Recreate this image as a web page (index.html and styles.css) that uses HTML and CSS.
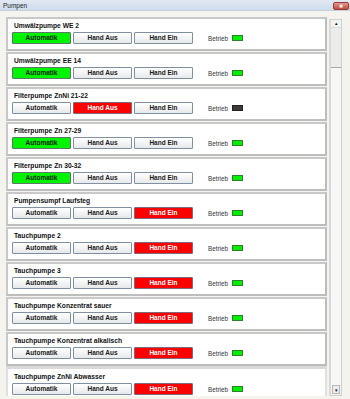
FILE: index.html
```html
<!DOCTYPE html>
<html>
<head>
<meta charset="utf-8">
<link rel="stylesheet" href="styles.css">
</head>
<body>
<div class="titlebar">
  <span class="title">Pumpen</span>
  <span class="close">&#x2716;</span>
</div>
<div class="main">
  <div class="list">
    <div class="panel">
      <div class="label">Umwälzpumpe WE 2</div>
      <div class="row"><span class="btn green">Automatik</span><span class="btn">Hand Aus</span><span class="btn">Hand Ein</span><span class="betrieb">Betrieb</span><span class="led"></span></div>
    </div>
    <div class="panel">
      <div class="label">Umwälzpumpe EE 14</div>
      <div class="row"><span class="btn green">Automatik</span><span class="btn">Hand Aus</span><span class="btn">Hand Ein</span><span class="betrieb">Betrieb</span><span class="led"></span></div>
    </div>
    <div class="panel">
      <div class="label">Filterpumpe ZnNi 21-22</div>
      <div class="row"><span class="btn">Automatik</span><span class="btn red">Hand Aus</span><span class="btn">Hand Ein</span><span class="betrieb">Betrieb</span><span class="led off"></span></div>
    </div>
    <div class="panel">
      <div class="label">Filterpumpe Zn 27-29</div>
      <div class="row"><span class="btn green">Automatik</span><span class="btn">Hand Aus</span><span class="btn">Hand Ein</span><span class="betrieb">Betrieb</span><span class="led"></span></div>
    </div>
    <div class="panel">
      <div class="label">Filterpumpe Zn 30-32</div>
      <div class="row"><span class="btn green">Automatik</span><span class="btn">Hand Aus</span><span class="btn">Hand Ein</span><span class="betrieb">Betrieb</span><span class="led"></span></div>
    </div>
    <div class="panel">
      <div class="label">Pumpensumpf Laufsteg</div>
      <div class="row"><span class="btn">Automatik</span><span class="btn">Hand Aus</span><span class="btn red">Hand Ein</span><span class="betrieb">Betrieb</span><span class="led"></span></div>
    </div>
    <div class="panel">
      <div class="label">Tauchpumpe 2</div>
      <div class="row"><span class="btn">Automatik</span><span class="btn">Hand Aus</span><span class="btn red">Hand Ein</span><span class="betrieb">Betrieb</span><span class="led"></span></div>
    </div>
    <div class="panel">
      <div class="label">Tauchpumpe 3</div>
      <div class="row"><span class="btn">Automatik</span><span class="btn">Hand Aus</span><span class="btn red">Hand Ein</span><span class="betrieb">Betrieb</span><span class="led"></span></div>
    </div>
    <div class="panel">
      <div class="label">Tauchpumpe Konzentrat sauer</div>
      <div class="row"><span class="btn">Automatik</span><span class="btn">Hand Aus</span><span class="btn red">Hand Ein</span><span class="betrieb">Betrieb</span><span class="led"></span></div>
    </div>
    <div class="panel">
      <div class="label">Tauchpumpe Konzentrat alkalisch</div>
      <div class="row"><span class="btn">Automatik</span><span class="btn">Hand Aus</span><span class="btn red">Hand Ein</span><span class="betrieb">Betrieb</span><span class="led"></span></div>
    </div>
    <div class="panel cut">
      <div class="label">Tauchpumpe ZnNi Abwasser</div>
      <div class="row"><span class="btn">Automatik</span><span class="btn">Hand Aus</span><span class="btn red">Hand Ein</span><span class="betrieb">Betrieb</span><span class="led"></span></div>
    </div>
  </div>
  <div class="scrollbar">
    <div class="arrow">&#9652;</div>
    <div class="thumb"></div>
    <div class="track"></div>
    <div class="arrow down">&#9662;</div>
  </div>
</div>
</body>
</html>
```
FILE: styles.css
```css
html, body {
  margin: 0;
  padding: 0;
}
body {
  width: 350px;
  height: 399px;
  overflow: hidden;
  background: #f4f3ee;
  font-family: "Liberation Sans", Arial, sans-serif;
}
.titlebar {
  height: 11px;
  background: linear-gradient(#e1e9f3, #cfdcec);
  border-bottom: 1px solid #c3cfdc;
  display: flex;
  align-items: center;
  justify-content: space-between;
  padding: 0 1px 0 3px;
  box-sizing: border-box;
}
.title {
  font-size: 6.5px;
  color: #222;
}
.close {
  width: 16px;
  height: 8px;
  margin-top: 1px;
  background: linear-gradient(#e39a92, #c44a3f);
  border: 1px solid #9a3a34;
  border-radius: 2px;
  color: #fff;
  font-size: 5px;
  line-height: 7px;
  text-align: center;
  box-sizing: border-box;
}
.main {
  display: flex;
  align-items: flex-start;
  padding: 6px 0 0 6px;
  height: 379px;
  gap: 2px;
}
.list {
  width: 321px;
  height: 379px;
  overflow: hidden;
}
.panel {
  height: 34px;
  box-sizing: border-box;
  margin-bottom: 1px;
  background: #fff;
  border: 2px solid #c9c9c9;
  border-right-color: #bdbdbd;
  border-bottom-color: #bdbdbd;
  padding: 3px 0 0 4px;
}
.panel.cut {
  border-top: 3px solid #d9d9d9;
  margin-top: -1px;
  border-left-color: #e0e0e0;
  border-right-color: #e0e0e0;
  border-bottom: none;
  height: 36px;
  padding-top: 4px;
}
.label {
  font-size: 6.7px;
  font-weight: bold;
  line-height: 8px;
  color: #111;
  padding-left: 2px;
}
.row {
  display: flex;
  align-items: center;
  margin-top: 2px;
  gap: 2px;
}
.btn {
  width: 59px;
  height: 12px;
  box-sizing: border-box;
  border: 1px solid #7f90a3;
  border-radius: 1px;
  background: linear-gradient(#ffffff, #e6e8ea);
  font-size: 6.5px;
  font-weight: bold;
  line-height: 10px;
  text-align: center;
  color: #1a1a1a;
}
.btn.green {
  background: #00f400;
  border-color: #5c7a6a;
  color: #0a1a0a;
}
.btn.red {
  background: #ff0000;
  border-color: #7d6a7a;
  color: #fff;
}
.betrieb {
  margin-left: 13px;
  font-size: 6.3px;
  color: #333;
}
.led {
  width: 11px;
  height: 6px;
  box-sizing: border-box;
  margin-left: 2px;
  background: #00ee00;
  border: 1px solid #2f7f2f;
}
.led.off {
  background: #3a3a3a;
  border-color: #222;
}
.scrollbar {
  margin-top: 2px;
  width: 13px;
  height: 377px;
  box-sizing: border-box;
  border: 1px solid #d0d0d0;
  border-left: 2px solid #dadada;
  background: #f3f3f3;
  display: flex;
  flex-direction: column;
}
.arrow {
  height: 7px;
  font-size: 5px;
  line-height: 7px;
  text-align: center;
  color: #111;
}
.arrow.down {
  height: 9px;
  border: 1px solid #b8b8b8;
  background: #ececec;
  margin: 0 1px 1px 1px;
  line-height: 8px;
  box-sizing: border-box;
}
.thumb {
  height: 39px;
  background: #ececec;
  border-bottom: 1px solid #a8a8a8;
  border-top: 1px solid #dcdcdc;
}
.track {
  flex: 1;
  background: #f7f7f7;
}
```
